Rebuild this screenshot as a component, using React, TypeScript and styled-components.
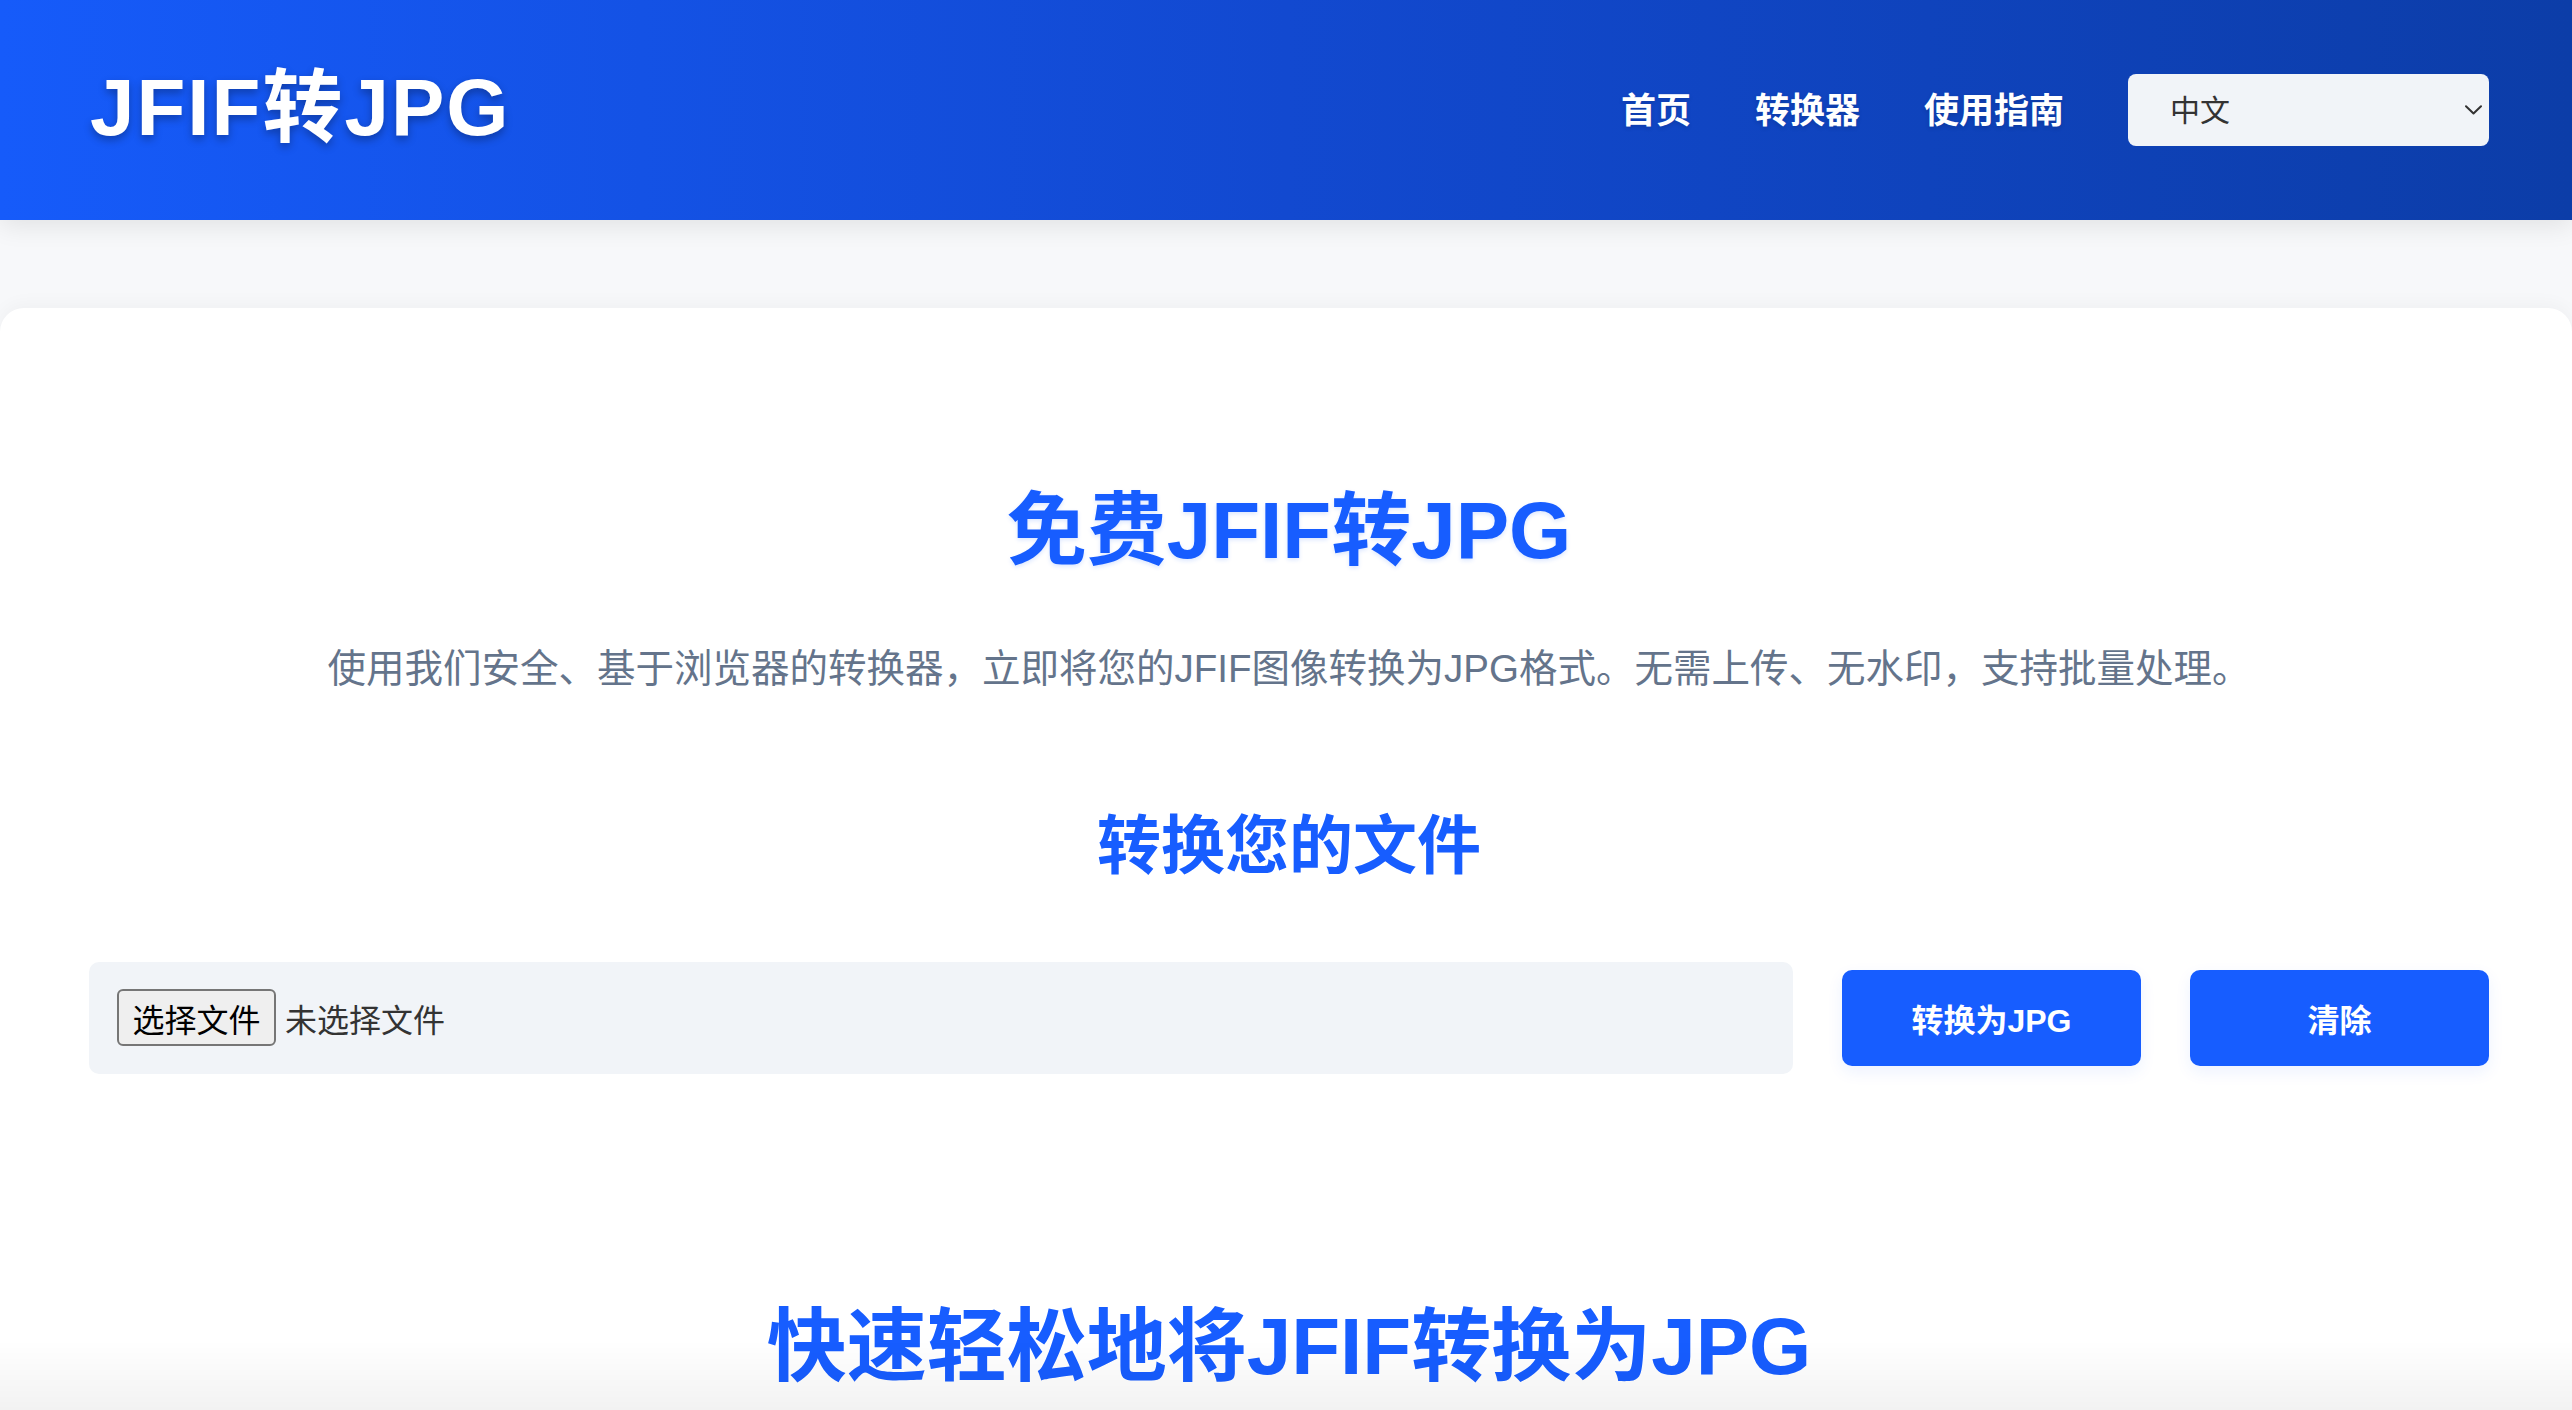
import React from "react";
import styled, { createGlobalStyle } from "styled-components";

const FONT = `"Liberation Sans", "Noto Sans CJK SC", sans-serif`;
const BLUE = "#175dff";

const Global = createGlobalStyle`
  * { box-sizing: border-box; }
  html, body { margin: 0; padding: 0; }
  body {
    background: #f7f8fa;
    font-family: ${FONT};
    overflow: hidden;
  }
`;

const Page = styled.div`
  min-height: 1410px;
  position: relative;
`;

const Header = styled.header`
  height: 220px;
  padding: 0 83px 0 90px;
  display: flex;
  align-items: center;
  justify-content: space-between;
  background: linear-gradient(90deg, #165bfa 0%, #1249d0 50%, #0c3da8 100%);
  box-shadow: 0 6px 24px rgba(0, 0, 0, 0.09);
  position: relative;
  z-index: 1;
`;

const Logo = styled.div`
  font-size: 80px;
  font-weight: 700;
  color: #fff;
  letter-spacing: 2px;
  text-shadow: 0 4px 8px rgba(0, 0, 0, 0.3);
  line-height: 1;
  margin-top: -4px;
`;

const Nav = styled.nav`
  display: flex;
  align-items: center;
  gap: 64px;
`;

const NavLink = styled.a`
  font-size: 35px;
  font-weight: 700;
  color: #fff;
  text-decoration: none;
  text-shadow: 0 2px 4px rgba(0, 0, 0, 0.15);
  line-height: 1;
`;

const SelectWrap = styled.div`
  position: relative;
  width: 361px;
  height: 72px;
`;

const LangSelect = styled.select`
  appearance: none;
  -webkit-appearance: none;
  width: 100%;
  height: 100%;
  border: none;
  border-radius: 8px;
  background: #f1f4f8;
  color: #333;
  font-family: ${FONT};
  font-size: 30px;
  padding: 0 0 0 42px;
  outline: none;
`;

const Chevron = styled.svg`
  position: absolute;
  right: 7px;
  top: 31px;
  width: 17px;
  height: 10px;
  pointer-events: none;
`;

const Card = styled.main`
  margin-top: 88px;
  background: #fff;
  border-radius: 24px 24px 0 0;
  box-shadow: 0 -4px 18px rgba(0, 0, 0, 0.035);
  padding: 175px 83px 200px 89px;
  display: flex;
  flex-direction: column;
  align-items: center;
`;

const Title = styled.h1`
  margin: 0;
  font-size: 80px;
  line-height: 96px;
  font-weight: 700;
  color: ${BLUE};
  text-shadow: 0 2px 4px rgba(23, 93, 255, 0.15);
`;

const Subtitle = styled.p`
  margin: 59px 0 0;
  font-size: 38.5px;
  line-height: 61px;
  color: #64748b;
  text-align: center;
`;

const SectionTitle = styled.h2<{ $size: number; $gap: number }>`
  margin: ${(p) => p.$gap}px 0 0;
  font-size: ${(p) => p.$size}px;
  line-height: 1.2;
  font-weight: 700;
  color: ${BLUE};
  text-align: center;
`;

const Row = styled.div`
  margin-top: 77px;
  width: 100%;
  display: flex;
  align-items: center;
  gap: 49px;
`;

const FileBox = styled.label`
  flex: 1;
  height: 112px;
  background: #f1f4f8;
  border-radius: 10px;
  padding: 0 28px;
  display: flex;
  align-items: center;
  cursor: pointer;
`;

const HiddenInput = styled.input`
  display: none;
`;

const FakeButton = styled.span`
  width: 159px;
  height: 57px;
  border: 2px solid #767676;
  border-radius: 6px;
  background: #efefef;
  color: #000;
  font-size: 32px;
  display: flex;
  align-items: center;
  justify-content: center;
`;

const FileName = styled.span`
  margin-left: 9px;
  font-size: 32px;
  color: #333;
`;

const ActionButton = styled.button`
  width: 299px;
  height: 96px;
  border: none;
  border-radius: 10px;
  background: ${BLUE};
  color: #fff;
  font-family: ${FONT};
  font-size: 32px;
  font-weight: 600;
  box-shadow: 0 6px 16px rgba(23, 93, 255, 0.08);
  cursor: pointer;
`;

const BottomFade = styled.div`
  position: fixed;
  left: 0;
  right: 0;
  bottom: 0;
  height: 70px;
  background: linear-gradient(rgba(0, 0, 0, 0), rgba(0, 0, 0, 0.05));
  pointer-events: none;
`;

export default function App() {
  return (
    <Page>
      <Global />
      <Header>
        <Logo>JFIF转JPG</Logo>
        <Nav>
          <NavLink href="#">首页</NavLink>
          <NavLink href="#">转换器</NavLink>
          <NavLink href="#">使用指南</NavLink>
          <SelectWrap>
            <LangSelect defaultValue="zh">
              <option value="zh">中文</option>
              <option value="en">English</option>
            </LangSelect>
            <Chevron viewBox="0 0 17 10" fill="none">
              <path d="M1 1.2 L8.5 8.5 L16 1.2" stroke="#333" strokeWidth="2" strokeLinecap="round" strokeLinejoin="round" />
            </Chevron>
          </SelectWrap>
        </Nav>
      </Header>
      <Card>
        <Title>免费JFIF转JPG</Title>
        <Subtitle>
          使用我们安全、基于浏览器的转换器，立即将您的JFIF图像转换为JPG格式。无需上传、无水印，支持批量处理。
        </Subtitle>
        <SectionTitle $size={64} $gap={109}>转换您的文件</SectionTitle>
        <Row>
          <FileBox>
            <HiddenInput type="file" accept=".jfif" multiple />
            <FakeButton>选择文件</FakeButton>
            <FileName>未选择文件</FileName>
          </FileBox>
          <ActionButton>转换为JPG</ActionButton>
          <ActionButton>清除</ActionButton>
        </Row>
        <SectionTitle $size={80} $gap={225}>快速轻松地将JFIF转换为JPG</SectionTitle>
      </Card>
      <BottomFade />
    </Page>
  );
}
